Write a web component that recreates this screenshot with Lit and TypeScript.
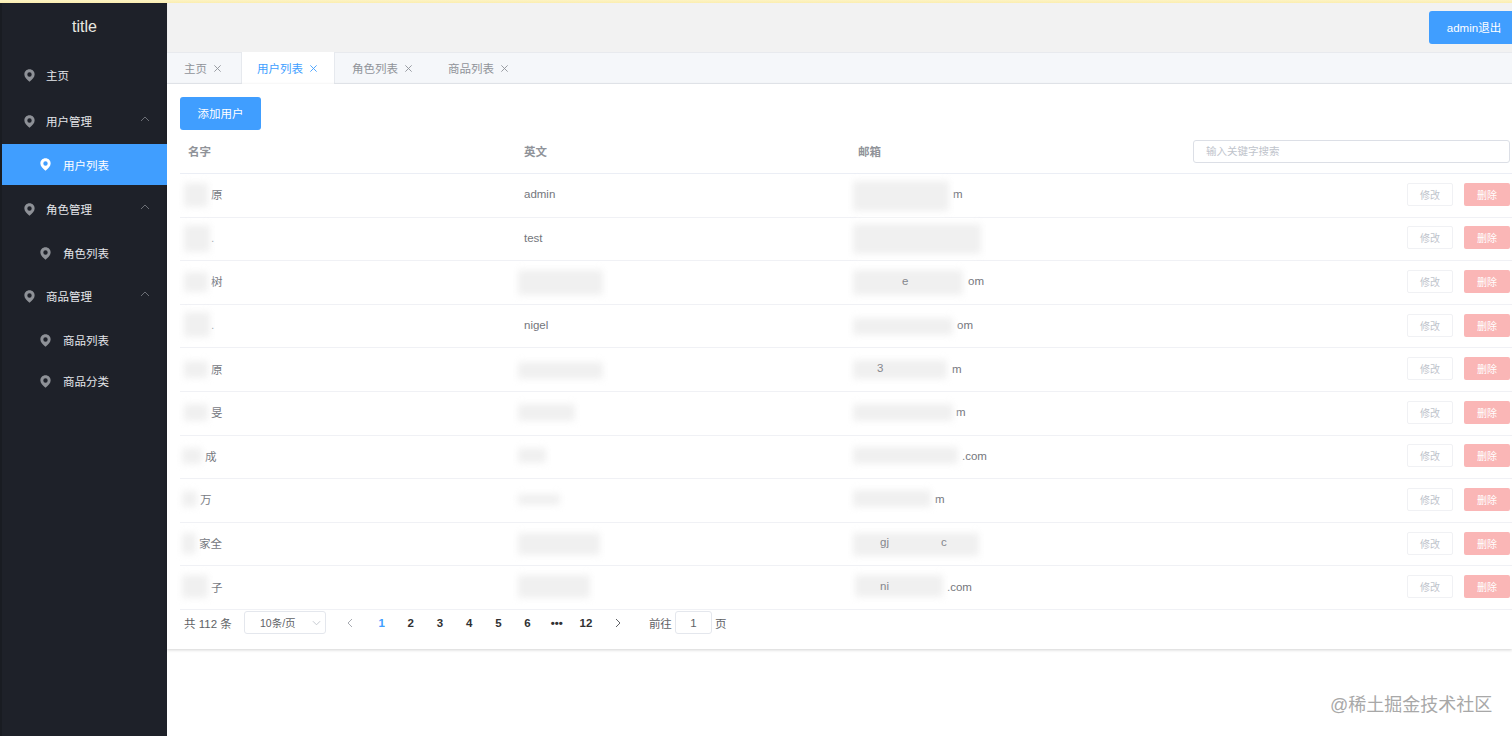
import { LitElement, html, css, svg } from "lit";
import { customElement } from "lit/decorators.js";

const pin = svg`<svg class="pin" viewBox="0 0 12 14" width="11" height="13"><path fill-rule="evenodd" fill="currentColor" d="M6 .3C2.8.3.4 2.8.4 5.8c0 3 2.6 5.6 5.6 7.9 3-2.3 5.6-4.9 5.6-7.9C11.6 2.8 9.2.3 6 .3zM6 3.5a2.4 2.4 0 1 1 0 4.8 2.4 2.4 0 0 1 0-4.8z"/></svg>`;
const chev = svg`<svg class="chev" viewBox="0 0 10 6" width="10" height="6"><path d="M1 5l4-4 4 4" fill="none" stroke="currentColor" stroke-width="1"/></svg>`;
const cross = svg`<svg class="x" viewBox="0 0 10 10" width="9" height="9"><path d="M1.5 1.5l7 7M8.5 1.5l-7 7" fill="none" stroke="currentColor" stroke-width="1"/></svg>`;
const arrowL = svg`<svg viewBox="0 0 8 10" width="8" height="10"><path d="M6 1L2 5l4 4" fill="none" stroke="currentColor" stroke-width="1"/></svg>`;
const arrowR = svg`<svg viewBox="0 0 8 10" width="8" height="10"><path d="M2 1l4 4-4 4" fill="none" stroke="currentColor" stroke-width="1"/></svg>`;
const chevDown = svg`<svg viewBox="0 0 10 6" width="9" height="6"><path d="M1 1l4 4 4-4" fill="none" stroke="currentColor" stroke-width="1"/></svg>`;

type Nav = { label: string; cls: string; chevron?: boolean };
const nav: Nav[] = [
  { label: "主页", cls: "top first" },
  { label: "用户管理", cls: "top gap", chevron: true },
  { label: "用户列表", cls: "sub active" },
  { label: "角色管理", cls: "top gap", chevron: true },
  { label: "角色列表", cls: "sub" },
  { label: "商品管理", cls: "top", chevron: true },
  { label: "商品列表", cls: "sub" },
  { label: "商品分类", cls: "sub tight" },
];

const tabs = [
  { label: "主页", w: 71 },
  { label: "用户列表", w: 94, active: true },
  { label: "角色列表", w: 95 },
  { label: "商品列表", w: 95 },
];

type Row = { nx: number; n: string; en?: string; ex: number; e: string };
const rows: Row[] = [
  { nx: 31, n: "原", en: "admin", ex: 103, e: "m" },
  { nx: 31, n: ".", en: "test", ex: 0, e: "" },
  { nx: 31, n: "树", ex: 118, e: "om" },
  { nx: 31, n: ".", en: "nigel", ex: 107, e: "om" },
  { nx: 31, n: "原", ex: 102, e: "m" },
  { nx: 31, n: "旻", ex: 106, e: "m" },
  { nx: 25, n: "成", ex: 112, e: ".com" },
  { nx: 20, n: "万", ex: 85, e: "m" },
  { nx: 19, n: "家全", ex: 0, e: "" },
  { nx: 31, n: "子", ex: 97, e: ".com" },
];

// Redaction smudges: left, top, width, height on the page.
const blobs: number[][] = [
  [185, 184, 22, 22], [854, 182, 94, 28],
  [185, 226, 24, 25], [854, 225, 126, 28],
  [185, 273, 22, 18], [519, 271, 83, 23], [854, 271, 108, 23],
  [185, 313, 24, 23], [854, 319, 98, 15],
  [185, 362, 22, 15], [519, 363, 83, 15], [854, 361, 92, 17],
  [185, 405, 22, 15], [519, 405, 55, 15], [854, 405, 98, 15],
  [183, 449, 18, 14], [519, 449, 26, 13], [854, 448, 103, 15],
  [183, 492, 13, 14], [519, 495, 40, 9], [854, 491, 76, 15],
  [183, 534, 12, 19], [519, 534, 80, 20], [854, 534, 124, 21],
  [183, 576, 24, 21], [519, 576, 70, 21], [856, 576, 86, 20],
];
// Letters that show through the smudges.
const frags: [number, number, string][] = [
  [902, 281, "e"], [877, 368, "3"], [880, 542, "gj"], [941, 542, "c"], [880, 586, "ni"],
];

@customElement("app-root")
export class AppRoot extends LitElement {
  static styles = css`
    :host {
      display: block; position: relative; width: 1512px; height: 736px; overflow: hidden; background: #fff;
      font-family: "Liberation Sans", "Noto Sans CJK SC", sans-serif; font-size: 11.5px; color: #606266;
    }
    .strip { height: 3px; background: linear-gradient(#fdf3c4, #fbeeb0); }
    .layout { display: flex; height: 733px; }
    .side { width: 165px; flex: none; background: #1e2129; border-left: 2px solid #191c22; color: #e4e6ea; }
    .title { height: 49px; padding-bottom: 2px; box-sizing: border-box; display: flex; align-items: center; justify-content: center; font-size: 16px; color: #e8e8e0; }
    .item { display: flex; align-items: center; gap: 11px; position: relative; }
    .pin { color: #8e9197; flex: none; }
    .top { height: 44px; padding-left: 22px; margin-bottom: 1px; }
    .first { margin-top: 1px; margin-bottom: 0; }
    .gap { margin-top: 2px; }
    .sub { height: 42px; padding-left: 38px; gap: 12px; }
    .tight { margin-top: -1px; }
    .active { height: 41px; background: #409eff; color: #fff; }
    .active .pin { color: #fff; }
    .chev { position: absolute; right: 17px; top: 17px; color: #6b6e75; }
    .main { flex: 1; min-width: 0; display: flex; flex-direction: column; }
    .head { height: 49px; background: #f2f2f2; display: flex; justify-content: flex-end; align-items: flex-start; border-left: 1px solid #eee; }
    .btn { display: flex; align-items: center; justify-content: center; background: #409eff; color: #fff; border-radius: 3px; font-size: 11.5px; padding-bottom: 2px; box-sizing: border-box; }
    .logout { width: 90px; height: 33px; margin-top: 8px; margin-right: -7px; flex: none; }
    .tabs { height: 32px; display: flex; background: #f5f7fa; border-top: 1px solid #e8eaee; border-bottom: 1px solid #e6e9ee; box-sizing: border-box; padding-left: 1px; color: #909399; }
    .tab { display: flex; align-items: center; padding-left: 16px; box-sizing: border-box; margin-right: 1px; margin-top: -1px; margin-bottom: -1px; gap: 6px; }
    .tab .x { color: #8f9298; }
    .tab.on { background: #fff; color: #409eff; border-left: 1px solid #e6e9ee; border-right: 1px solid #e6e9ee; padding-left: 15px; margin-left: 1px; }
    .tab.on .x { color: #409eff; }
    .content { padding: 13px 0 0 13px; box-shadow: 0 1px 3px rgba(0,0,0,.18); height: 565px; box-sizing: border-box; }
    .add { width: 81px; height: 33px; }
    .grid { display: grid; grid-template-columns: 336px 334px 335px 327px; align-items: center; }
    .th { height: 44px; padding-bottom: 1px; border-bottom: 1px solid #ebeef5; color: #909399; font-weight: 700; box-sizing: border-box; }
    .tr { height: 43.6px; padding-bottom: 2px; border-bottom: 1px solid #f0f1f5; box-sizing: border-box; color: #74767c; }
    .cell { padding-left: 8px; }
    .blank { padding: 0; }
    .search { width: 317px; height: 23px; margin-left: 8px; border: 1px solid #dcdfe6; border-radius: 3px; box-sizing: border-box; display: flex; align-items: center; padding: 0 0 1px 12px; font-size: 10.5px; font-weight: 400; color: #c0c4cc; }
    .ops { display: flex; justify-content: flex-end; gap: 11px; padding-right: 2px; }
    .op { width: 46px; height: 23px; border-radius: 2px; display: flex; align-items: center; justify-content: center; font-size: 10px; box-sizing: border-box; }
    .edit { border: 1px solid #f0f1f4; color: #c0c4cc; }
    .del { background: #fab6b6; color: #fff; }
    .pager { display: flex; align-items: center; padding: 0 0 0 4px; height: 26px; }
    .total { width: 60px; }
    .select { width: 82px; height: 23px; border: 1px solid #e4e7ed; border-radius: 3px; box-sizing: border-box; display: flex; align-items: center; justify-content: space-between; padding: 0 4px 0 15px; color: #606266; font-size: 10.5px; }
    .select svg { color: #c0c4cc; }
    .pages { display: flex; margin-left: 6.2px; align-items: center; }
    .pg { width: 29.2px; text-align: center; font-weight: 700; color: #303133; display: flex; justify-content: center; align-items: center; }
    .pg.cur { color: #409eff; }
    .pg.arrow { color: #a8abb2; width: 34.8px; }
    .pg.arrow.next { color: #606266; }
    .jump { display: flex; align-items: center; margin-left: 13.6px; gap: 3px; }
    .jump-in { width: 37px; height: 23px; border: 1px solid #e4e7ed; border-radius: 3px; box-sizing: border-box; display: flex; align-items: center; justify-content: center; }
    .blob { position: absolute; background: #f0f0f0; filter: blur(3px); box-shadow: 0 0 0 3px #fafafa; border-radius: 2px; }
    .frag { position: absolute; transform: translateY(-50%); color: #85878d; }
    .mark { position: absolute; left: 1330px; top: 693px; font-size: 18px; line-height: 24px; color: #a8a8a8; white-space: nowrap; }
  `;

  render() {
    return html`
      <div class="strip"></div>
      <div class="layout">
        <aside class="side">
          <div class="title">title</div>
          ${nav.map(
            (n) => html`<div class="item ${n.cls}">${pin}<span>${n.label}</span>${n.chevron ? chev : ""}</div>`
          )}
        </aside>
        <div class="main">
          <header class="head"><div class="btn logout">admin退出</div></header>
          <nav class="tabs">
            ${tabs.map(
              (t) => html`<div class="tab ${t.active ? "on" : ""}" style="width:${t.w}px"><span>${t.label}</span>${cross}</div>`
            )}
          </nav>
          <section class="content">
            <div class="btn add">添加用户</div>
            <div class="grid th">
              <div class="cell">名字</div><div class="cell">英文</div><div class="cell">邮箱</div>
              <div class="blank"><div class="search">输入关键字搜索</div></div>
            </div>
            ${rows.map(
              (r) => html`<div class="grid tr">
                <div class="cell" style="padding-left:${r.nx}px">${r.n}</div>
                <div class="cell">${r.en ?? ""}</div>
                <div class="cell" style="padding-left:${r.ex}px">${r.e}</div>
                <div class="ops"><div class="op edit">修改</div><div class="op del">删除</div></div>
              </div>`
            )}
            <div class="pager">
              <span class="total">共 112 条</span>
              <div class="select"><span>10条/页</span>${chevDown}</div>
              <div class="pages">
                <span class="pg arrow">${arrowL}</span>
                <span class="pg cur">1</span><span class="pg">2</span><span class="pg">3</span><span class="pg">4</span><span class="pg">5</span><span class="pg">6</span><span class="pg">•••</span><span class="pg">12</span>
                <span class="pg arrow next">${arrowR}</span>
              </div>
              <div class="jump"><span>前往</span><div class="jump-in">1</div><span>页</span></div>
            </div>
          </section>
        </div>
      </div>
      ${blobs.map(([l, t, w, h]) => html`<div class="blob" style="left:${l}px;top:${t}px;width:${w}px;height:${h}px"></div>`)}
      ${frags.map(([x, y, s]) => html`<span class="frag" style="left:${x}px;top:${y}px">${s}</span>`)}
      <div class="mark">@稀土掘金技术社区</div>
    `;
  }
}
